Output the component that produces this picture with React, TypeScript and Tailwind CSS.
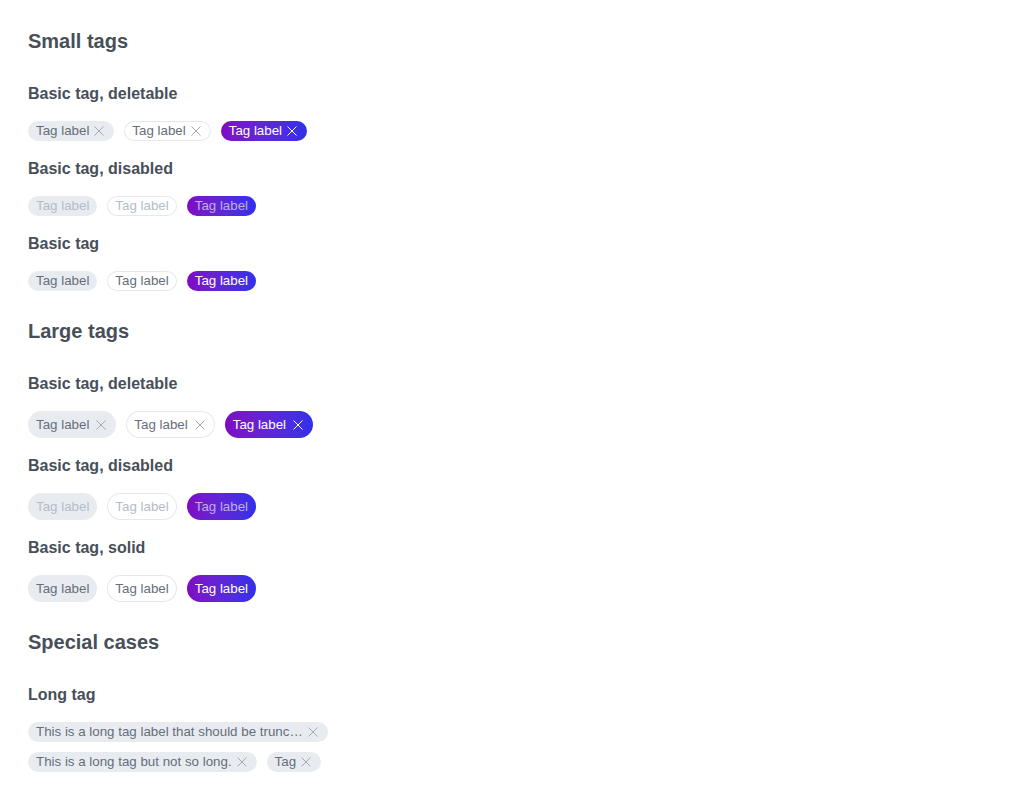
import React from "react";

type Variant = "grey" | "outline" | "solid";

function XIcon({ light }: { light?: boolean }) {
  return (
    <svg width="10" height="10" viewBox="0 0 10 10" className={light ? "text-white" : "text-[#a3aab5]"}>
      <path d="M0.5 0.5 L9.5 9.5 M9.5 0.5 L0.5 9.5" stroke="currentColor" strokeWidth="1" fill="none" />
    </svg>
  );
}

function Tag({
  variant,
  large,
  deletable,
  disabled,
  label = "Tag label",
  truncate,
}: {
  variant: Variant;
  large?: boolean;
  deletable?: boolean;
  disabled?: boolean;
  label?: string;
  truncate?: boolean;
}) {
  const base = large ? "h-[27px]" : "h-[20px]";
  let cls = "";
  if (variant === "grey") cls = `bg-[#e8ecf1] ${disabled ? "text-[#b3bcc8]" : "text-[#666e7a]"}`;
  if (variant === "outline")
    cls = `bg-white shadow-[inset_0_0_0_1px_#e5e8ee] ${disabled ? "text-[#b3bcc8]" : "text-[#666e7a]"}`;
  if (variant === "solid")
    cls = `bg-gradient-to-r from-[#7f07c4] to-[#2f30ea] ${disabled ? "text-[#bfaeea]" : "text-white"}`;
  return (
    <span
      className={`inline-flex items-center rounded-full ${base} ${cls} pl-2 ${deletable ? "pr-[10px]" : "pr-2"} text-[13.33px] leading-none ${truncate ? "max-w-[300px]" : ""}`}
    >
      <span className={truncate ? "truncate leading-[16px]" : "whitespace-nowrap"}>{label}</span>
      {deletable && (
        <span className={`${large ? "ml-[7px]" : "ml-[5px]"} flex shrink-0`}>
          <XIcon light={variant === "solid"} />
        </span>
      )}
    </span>
  );
}

function H2({ children }: { children: React.ReactNode }) {
  return <h2 className="text-[20px] leading-[28px] font-bold text-[#474f59]">{children}</h2>;
}
function H3({ children, first }: { children: React.ReactNode; first?: boolean }) {
  return (
    <h3 className={`text-[16px] leading-[24px] font-bold text-[#474f59] mb-[15px] ${first ? "mt-[27px]" : "mt-[16px]"}`}>
      {children}
    </h3>
  );
}

function Row({ children }: { children: React.ReactNode }) {
  return <div className="flex items-center gap-[10px]">{children}</div>;
}

export default function App() {
  return (
    <div className="bg-white min-h-[791px] px-[28px] pt-[27px]" style={{ fontFamily: '"Liberation Sans", Arial, sans-serif' }}>
      <H2>Small tags</H2>
      <H3 first>Basic tag, deletable</H3>
      <Row>
        <Tag variant="grey" deletable />
        <Tag variant="outline" deletable />
        <Tag variant="solid" deletable />
      </Row>
      <H3>Basic tag, disabled</H3>
      <Row>
        <Tag variant="grey" disabled />
        <Tag variant="outline" disabled />
        <Tag variant="solid" disabled />
      </Row>
      <H3>Basic tag</H3>
      <Row>
        <Tag variant="grey" />
        <Tag variant="outline" />
        <Tag variant="solid" />
      </Row>

      <div className="mt-[26px]">
        <H2>Large tags</H2>
      </div>
      <H3 first>Basic tag, deletable</H3>
      <Row>
        <Tag variant="grey" large deletable />
        <Tag variant="outline" large deletable />
        <Tag variant="solid" large deletable />
      </Row>
      <H3>Basic tag, disabled</H3>
      <Row>
        <Tag variant="grey" large disabled />
        <Tag variant="outline" large disabled />
        <Tag variant="solid" large disabled />
      </Row>
      <H3>Basic tag, solid</H3>
      <Row>
        <Tag variant="grey" large />
        <Tag variant="outline" large />
        <Tag variant="solid" large />
      </Row>

      <div className="mt-[26px]">
        <H2>Special cases</H2>
      </div>
      <H3 first>Long tag</H3>
      <div className="flex flex-col gap-[10px]">
        <Row>
          <Tag variant="grey" deletable truncate label="This is a long tag label that should be truncated because it is way too long" />
        </Row>
        <Row>
          <Tag variant="grey" deletable label="This is a long tag but not so long." />
          <Tag variant="grey" deletable label="Tag" />
        </Row>
      </div>
    </div>
  );
}
